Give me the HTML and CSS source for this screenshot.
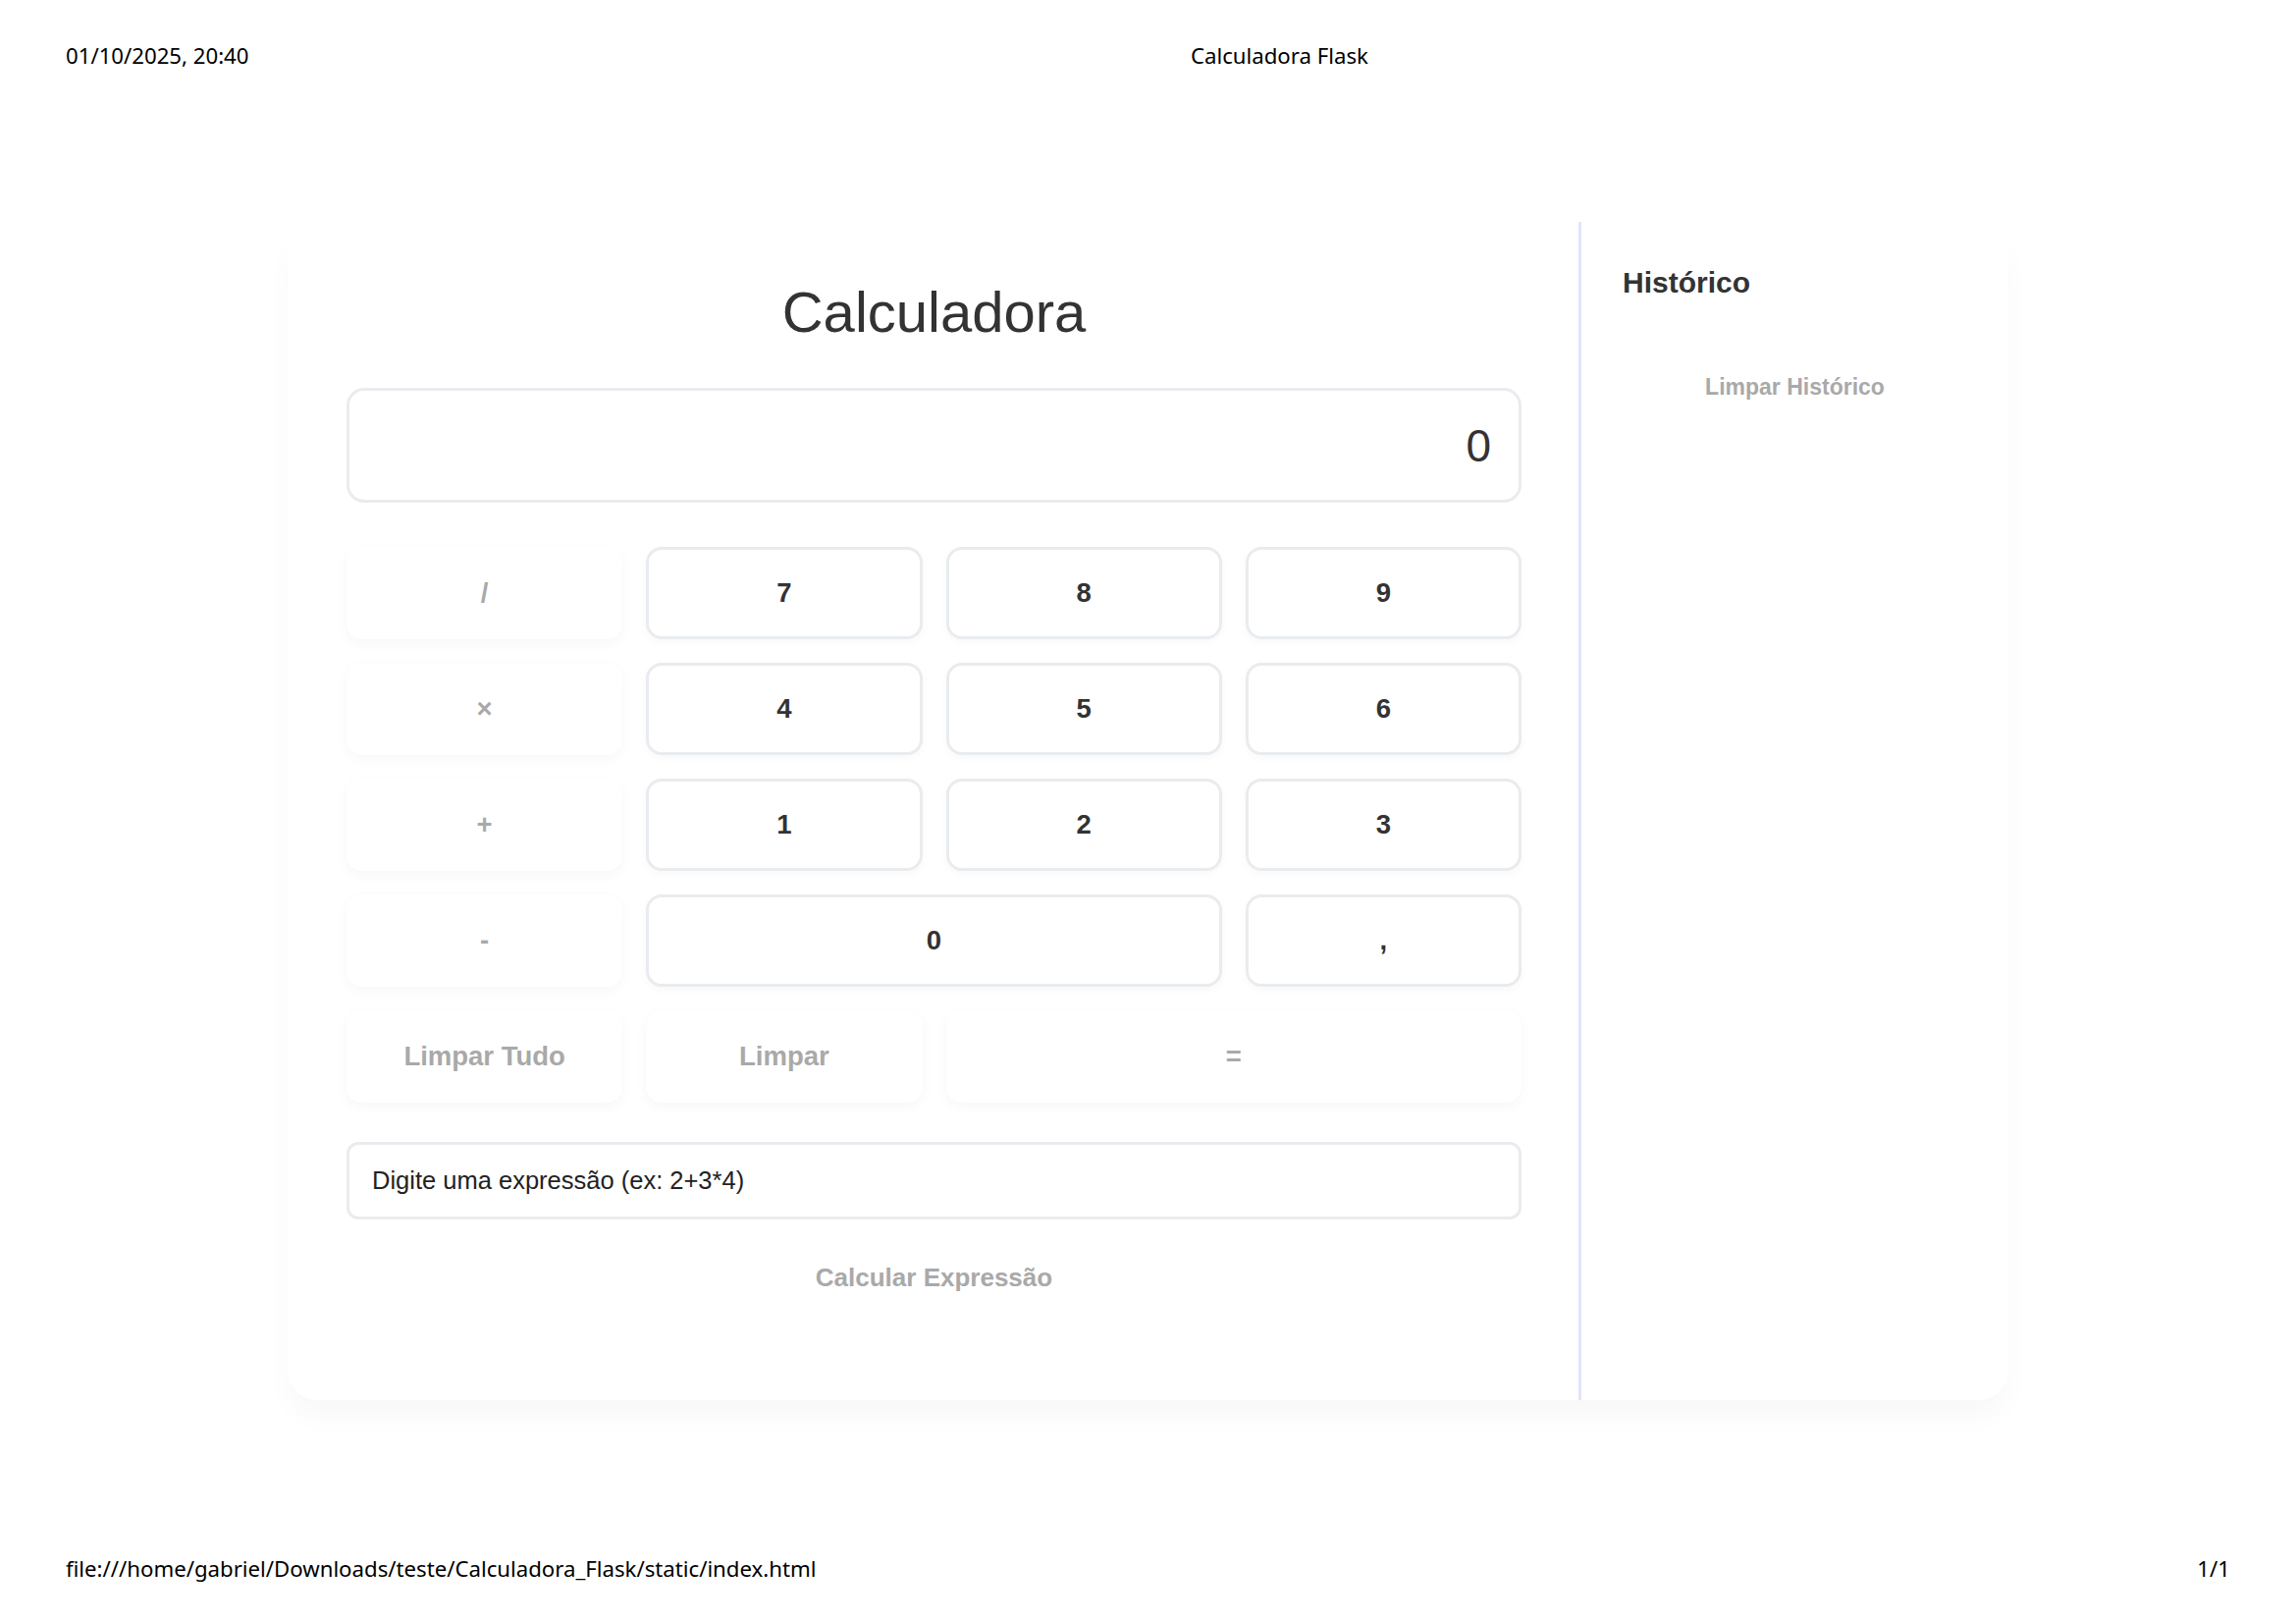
FILE: index.html
```html
<!DOCTYPE html>
<html lang="pt-BR">
<head>
<meta charset="utf-8">
<title>Calculadora Flask</title>
<link rel="stylesheet" href="styles.css">
</head>
<body>
<div class="page">
  <header class="print-head">
    <span class="print-date">01/10/2025, 20:40</span>
    <span class="print-title">Calculadora Flask</span>
  </header>
  <main class="main">
    <div class="card">
      <section class="calc">
        <h1 class="title">Calculadora</h1>
        <div class="display">0</div>
        <div class="keys">
          <button class="key op">/</button>
          <button class="key num">7</button>
          <button class="key num">8</button>
          <button class="key num">9</button>
          <button class="key op">×</button>
          <button class="key num">4</button>
          <button class="key num">5</button>
          <button class="key num">6</button>
          <button class="key op">+</button>
          <button class="key num">1</button>
          <button class="key num">2</button>
          <button class="key num">3</button>
          <button class="key op">-</button>
          <button class="key num span2">0</button>
          <button class="key num">,</button>
          <button class="key op">Limpar Tudo</button>
          <button class="key op">Limpar</button>
          <button class="key op span2">=</button>
        </div>
        <div class="expr">Digite uma expressão (ex: 2+3*4)</div>
        <button class="calc-expr">Calcular Expressão</button>
      </section>
      <aside class="history">
        <h2 class="history-title">Histórico</h2>
        <button class="clear-hist">Limpar Histórico</button>
      </aside>
    </div>
  </main>
  <footer class="print-foot">
    <span>file:///home/gabriel/Downloads/teste/Calculadora_Flask/static/index.html</span>
    <span>1/1</span>
  </footer>
</div>
</body>
</html>
```
FILE: styles.css
```css
* { box-sizing: border-box; }

html, body {
  margin: 0;
  padding: 0;
  background: #ffffff;
}

.page {
  width: 2339px;
  height: 1653px;
  display: flex;
  flex-direction: column;
  font-family: "Liberation Sans", Arial, sans-serif;
  color: #333333;
}

.print-head,
.print-foot {
  display: flex;
  align-items: center;
  font-family: "Noto Sans", "Open Sans", sans-serif;
  font-size: 22.2px;
  color: #000000;
}

.print-head {
  height: 112px;
  padding: 0 67px;
}

.print-date {
  width: 1146px;
}

.print-foot {
  height: 112px;
  margin-top: -2px;
  padding: 0 67px;
  justify-content: space-between;
}

.main {
  flex: 1;
}

.card {
  width: 1753px;
  height: 1200px;
  margin: 114px auto 0;
  display: flex;
  background: #ffffff;
  border-radius: 30px;
  box-shadow: 0 18px 30px -4px rgba(0, 0, 0, 0.035);
}

.calc {
  flex: 1;
  padding: 60px 58px 0 60px;
  display: flex;
  flex-direction: column;
}

.title {
  margin: 0;
  font-size: 58px;
  line-height: 64px;
  font-weight: normal;
  text-align: center;
  color: #333333;
}

.display {
  margin-top: 45px;
  height: 117px;
  border: 3px solid #e9ecef;
  border-radius: 18px;
  display: flex;
  align-items: center;
  justify-content: flex-end;
  padding-right: 28px;
  font-size: 46px;
  color: #333333;
}

.keys {
  margin-top: 45px;
  display: grid;
  grid-template-columns: repeat(4, 1fr);
  grid-auto-rows: 94px;
  gap: 24px;
}

.key {
  font-family: "Liberation Sans", Arial, sans-serif;
  font-size: 27.5px;
  font-weight: bold;
  border-radius: 16px;
  background: #ffffff;
  cursor: pointer;
  padding: 0;
}

.num {
  border: 3px solid #e9ecef;
  color: #333333;
  box-shadow: 0 3px 8px rgba(0, 0, 0, 0.03);
}

.op {
  border: none;
  color: #a9a9a9;
  box-shadow: 0 4px 14px rgba(0, 0, 0, 0.035);
}

.span2 {
  grid-column: span 2;
}

.expr {
  margin-top: 40px;
  height: 79px;
  border: 3px solid #e9ecef;
  border-radius: 12px;
  padding-left: 23px;
  display: flex;
  align-items: center;
  font-size: 25.5px;
  color: #222222;
}

.calc-expr {
  margin-top: 24px;
  height: 70px;
  width: 100%;
  border: none;
  background: transparent;
  font-family: "Liberation Sans", Arial, sans-serif;
  font-size: 26px;
  font-weight: bold;
  color: #a9a9a9;
  padding: 0;
}

.history {
  width: 438px;
  border-left: 3px solid #e1e5fb;
  padding: 45px 42px 0 42px;
  display: flex;
  flex-direction: column;
}

.history-title {
  margin: 0;
  font-size: 30px;
  line-height: 34px;
  font-weight: bold;
  color: #333333;
}

.clear-hist {
  margin-top: 62px;
  width: 100%;
  padding: 14px 0;
  line-height: 26px;
  border: none;
  background: transparent;
  font-family: "Liberation Sans", Arial, sans-serif;
  font-size: 23px;
  font-weight: bold;
  color: #a9a9a9;
}
```
